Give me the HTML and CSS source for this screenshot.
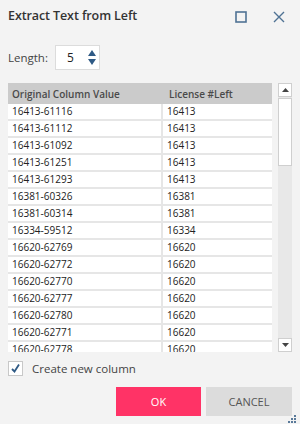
FILE: index.html
```html
<!DOCTYPE html>
<html>
<head>
<meta charset="utf-8">
<link rel="stylesheet" href="styles.css">
</head>
<body>
<div class="dialog">
  <div class="titlebar">
    <div class="title">Extract Text from Left</div>
    <div class="wincontrols">
      <svg class="ico" width="12" height="12" viewBox="0 0 12 12"><rect x="1" y="1" width="10" height="10" fill="none" stroke="#4f7294" stroke-width="1.6"/></svg>
      <svg class="ico" width="12" height="12" viewBox="0 0 12 12"><path d="M1 1 L11 11 M11 1 L1 11" stroke="#4f7294" stroke-width="1.4" fill="none"/></svg>
    </div>
  </div>
  <div class="lengthrow">
    <span class="label">Length:</span>
    <div class="spinner">
      <span class="val">5</span>
      <div class="arrows">
        <svg width="8" height="6" viewBox="0 0 8 6"><path d="M4 0 L8 6 L0 6 Z" fill="#2f5a85"/></svg>
        <svg width="8" height="6" viewBox="0 0 8 6"><path d="M0 0 L8 0 L4 6 Z" fill="#2f5a85"/></svg>
      </div>
    </div>
  </div>
  <div class="gridwrap">
    <div class="tableview">
      <div class="hdr"><div class="c1">Original Column Value</div><div class="c2">License #Left</div></div>
      <div class="row"><div class="c1">16413-61116</div><div class="c2">16413</div></div>
      <div class="row"><div class="c1">16413-61112</div><div class="c2">16413</div></div>
      <div class="row"><div class="c1">16413-61092</div><div class="c2">16413</div></div>
      <div class="row"><div class="c1">16413-61251</div><div class="c2">16413</div></div>
      <div class="row"><div class="c1">16413-61293</div><div class="c2">16413</div></div>
      <div class="row"><div class="c1">16381-60326</div><div class="c2">16381</div></div>
      <div class="row"><div class="c1">16381-60314</div><div class="c2">16381</div></div>
      <div class="row"><div class="c1">16334-59512</div><div class="c2">16334</div></div>
      <div class="row"><div class="c1">16620-62769</div><div class="c2">16620</div></div>
      <div class="row"><div class="c1">16620-62772</div><div class="c2">16620</div></div>
      <div class="row"><div class="c1">16620-62770</div><div class="c2">16620</div></div>
      <div class="row"><div class="c1">16620-62777</div><div class="c2">16620</div></div>
      <div class="row"><div class="c1">16620-62780</div><div class="c2">16620</div></div>
      <div class="row"><div class="c1">16620-62771</div><div class="c2">16620</div></div>
      <div class="row"><div class="c1">16620-62778</div><div class="c2">16620</div></div>
    </div>
    <div class="scrollbar">
      <div class="sbtn"><svg width="7" height="4" viewBox="0 0 7 4"><path d="M3.5 0 L7 4 L0 4 Z" fill="#444"/></svg></div>
      <div class="thumb"></div>
      <div class="track"></div>
      <div class="sbtn"><svg width="7" height="4" viewBox="0 0 7 4"><path d="M0 0 L7 0 L3.5 4 Z" fill="#444"/></svg></div>
    </div>
  </div>
  <div class="checkrow">
    <div class="checkbox"><svg width="11" height="11" viewBox="0 0 11 11"><path d="M2 6 L4.5 8.5 L9 1.5" stroke="#2f5a85" stroke-width="1.8" fill="none"/></svg></div>
    <span class="checklabel">Create new column</span>
  </div>
  <div class="buttons">
    <button class="btn ok">OK</button>
    <button class="btn cancel">CANCEL</button>
  </div>
  <svg class="grip" width="9" height="9" viewBox="0 0 9 9">
    <rect x="7" y="1" width="2" height="2" fill="#5a7a9a"/>
    <rect x="4" y="4" width="2" height="2" fill="#5a7a9a"/>
    <rect x="7" y="4" width="2" height="2" fill="#5a7a9a"/>
    <rect x="1" y="7" width="2" height="2" fill="#5a7a9a"/>
    <rect x="4" y="7" width="2" height="2" fill="#5a7a9a"/>
    <rect x="7" y="7" width="2" height="2" fill="#5a7a9a"/>
  </svg>
</div>
</body>
</html>
```

FILE: styles.css
```css
html, body {
  margin: 0;
  padding: 0;
  background: #f3f3f3;
}
body {
  font-family: "Open Sans", "Noto Sans", sans-serif;
  color: #333;
}
.dialog {
  position: relative;
  width: 300px;
  height: 424px;
  box-sizing: border-box;
  padding: 0 8px 0 8px;
  display: flex;
  flex-direction: column;
}
.titlebar {
  height: 31px;
  display: flex;
  align-items: center;
  justify-content: space-between;
}
.title {
  font-size: 12.5px;
  font-weight: 600;
  color: #333;
  letter-spacing: -0.1px;
}
.wincontrols {
  display: flex;
  gap: 26px;
  padding-right: 7px;
  padding-top: 2px;
}
.ico { display: block; }
.lengthrow {
  margin-top: 14px;
  display: flex;
  align-items: center;
  height: 25px;
}
.label {
  font-size: 11.5px;
  color: #444;
  width: 47px;
}
.spinner {
  width: 43px;
  height: 23px;
  background: #fff;
  border: 1px solid #dcdcdc;
  display: flex;
  align-items: center;
}
.val {
  font-size: 12px;
  color: #222;
  padding-left: 11px;
  width: 21px;
}
.arrows {
  display: flex;
  flex-direction: column;
  gap: 3px;
}
.arrows svg { display: block; }
.gridwrap {
  margin-top: 13px;
  display: flex;
  height: 269px;
}
.tableview {
  width: 264px;
  overflow: hidden;
  font-size: 10px;
}
.hdr {
  display: grid;
  grid-template-columns: 155px 1fr;
  background: #cbcbcb;
  height: 21px;
  align-items: center;
  font-weight: 600;
  color: #4a4a4a;
}
.hdr .c1, .hdr .c2 { padding-left: 4px; }
.hdr .c2 { padding-left: 6px; }
.row {
  display: grid;
  grid-template-columns: 155px 1fr;
  height: 17px;
  box-sizing: border-box;
  border-bottom: 2px solid #e6e6e6;
  background: #fff;
  color: #222;
}
.row .c1 {
  padding-left: 4px;
  border-right: 2px solid #e6e6e6;
  line-height: 15px;
}
.row .c2 {
  padding-left: 4px;
  line-height: 15px;
}
.scrollbar {
  margin-left: 6px;
  width: 14px;
  display: flex;
  flex-direction: column;
  background: #e8e8e8;
}
.sbtn {
  height: 14px;
  box-sizing: border-box;
  border: 1px solid #cfcfcf;
  background: #fff;
  display: flex;
  align-items: center;
  justify-content: center;
}
.thumb {
  height: 68px;
  box-sizing: border-box;
  border: 1px solid #cfcfcf;
  background: #fff;
  margin-top: 1px;
}
.track { flex: 1; }
.checkrow {
  margin-top: 9px;
  display: flex;
  align-items: center;
  height: 15px;
}
.checkbox {
  width: 15px;
  height: 15px;
  box-sizing: border-box;
  border: 1px solid #c8c8c8;
  background: #fff;
  display: flex;
  align-items: center;
  justify-content: center;
}
.checkbox svg { display: block; }
.checklabel {
  margin-left: 9px;
  font-size: 11.5px;
  color: #444;
}
.buttons {
  margin-top: 11px;
  display: flex;
  justify-content: flex-end;
  gap: 5px;
}
.btn {
  height: 29px;
  border: none;
  font-family: "Open Sans", "Noto Sans", sans-serif;
  font-size: 11px;
  padding: 0;
}
.ok {
  width: 85px;
  background: #ff3366;
  color: #fff;
}
.cancel {
  width: 86px;
  background: #dcdcdc;
  color: #555;
}
.grip {
  position: absolute;
  right: 4px;
  bottom: 1px;
}
```
